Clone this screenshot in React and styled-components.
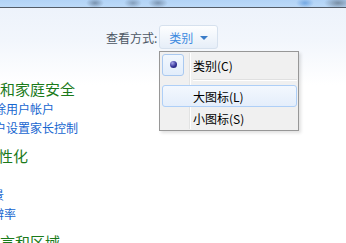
import React from 'react';
import styled, { createGlobalStyle } from 'styled-components';

const GlobalStyle = createGlobalStyle`
  html, body {
    margin: 0;
    padding: 0;
    background: #fff;
  }
  body {
    font-family: "Noto Sans CJK SC", "Noto Sans", sans-serif;
    font-size: 12px;
    overflow: hidden;
  }
`;

const sections = [
  {
    title: '用户帐户和家庭安全',
    head: -60,
    link: -54,
    links: ['添加或删除用户帐户', '为所有用户设置家长控制'],
  },
  {
    title: '外观和个性化',
    head: -62,
    link: -68,
    links: ['更改主题', '更改桌面背景', '调整屏幕分辨率'],
  },
  {
    title: '时钟、语言和区域',
    head: -60,
    link: -68,
    links: ['更改键盘或其他输入法'],
  },
];

const menuItems = [
  { label: '类别(C)', checked: true },
  { separator: true },
  { label: '大图标(L)', hover: true },
  { label: '小图标(S)' },
];

const App = () => {
  return (
    <Page>
      <GlobalStyle />
      <TitleStrip />
      <Header>
        <Label>查看方式:</Label>
        <ViewButton>
          类别
          <Arrow />
        </ViewButton>
      </Header>
      <Content>
        {sections.map((s) => (
          <Section key={s.title}>
            <Heading $shift={s.head}>{s.title}</Heading>
            {s.links.map((l) => (
              <TaskLink key={l} $shift={s.link}>
                {l}
              </TaskLink>
            ))}
          </Section>
        ))}
      </Content>
      <Menu>
        <Gutter />
        {menuItems.map((item, i) =>
          item.separator ? (
            <Separator key={i} />
          ) : (
            <MenuItem key={i} $hover={item.hover}>
              <CheckBox $checked={item.checked}>{item.checked && <Bullet />}</CheckBox>
              <ItemText>{item.label}</ItemText>
            </MenuItem>
          )
        )}
      </Menu>
    </Page>
  );
};

export default App;

const Page = styled.div`
  position: relative;
  width: 346px;
  height: 243px;
  overflow: hidden;
  background: linear-gradient(#ecf2fb 0px, #f2f6fc 40px, #ffffff 85px);
`;

const TitleStrip = styled.div`
  height: 7px;
  border-bottom: 1px solid #535c67;
  background:
    radial-gradient(ellipse 9px 5px at 95px 3px, rgba(70, 90, 115, 0.55), transparent),
    radial-gradient(ellipse 9px 5px at 133px 3px, rgba(70, 90, 115, 0.45), transparent),
    radial-gradient(ellipse 10px 5px at 158px 3px, rgba(70, 90, 115, 0.5), transparent),
    radial-gradient(ellipse 9px 5px at 305px 3px, rgba(60, 130, 210, 0.55), transparent),
    radial-gradient(ellipse 14px 6px at 338px 3px, rgba(80, 95, 110, 0.6), transparent),
    linear-gradient(#b2d3f6, #bcdaf8);
`;

const Header = styled.div`
  display: flex;
  align-items: center;
  height: 24px;
  padding: 17px 0 0 106px;
`;

const Label = styled.span`
  color: #4b5563;
  font-size: 12px;
  margin-right: 2px;
`;

const ViewButton = styled.div`
  display: flex;
  align-items: center;
  box-sizing: border-box;
  width: 59px;
  height: 24px;
  padding-left: 9px;
  border: 1px solid #d6e1ee;
  border-radius: 3px;
  background: linear-gradient(#fdfeff, #e6eef8);
  color: #3d8ae0;
  font-size: 12px;
`;

const Arrow = styled.span`
  width: 0;
  height: 0;
  margin-left: 7px;
  margin-top: 1px;
  border-left: 4px solid transparent;
  border-right: 4px solid transparent;
  border-top: 4px solid #3a7cc8;
`;

const Content = styled.div`
  display: flex;
  flex-direction: column;
  gap: 9px;
  margin-top: 30px;
`;

const Section = styled.div`
  display: flex;
  flex-direction: column;
`;

const Heading = styled.div`
  margin-left: ${(p) => p.$shift}px;
  font-size: 15px;
  line-height: 20px;
  color: #1a7a1a;
  white-space: nowrap;
`;

const TaskLink = styled.div`
  margin-left: ${(p) => p.$shift}px;
  font-size: 12px;
  line-height: 19px;
  color: #1766d0;
  white-space: nowrap;
`;

const Menu = styled.div`
  position: absolute;
  left: 159px;
  top: 51px;
  box-sizing: border-box;
  width: 140px;
  height: 80px;
  padding: 2px 1px 2px 2px;
  border: 1px solid #979797;
  background: #f0f0f0;
  box-shadow: 2px 2px 3px rgba(0, 0, 0, 0.12);
`;

const Gutter = styled.div`
  position: absolute;
  left: 29px;
  top: 1px;
  bottom: 1px;
  width: 1px;
  background: #e2e3e3;
  border-right: 1px solid #ffffff;
`;

const MenuItem = styled.div`
  position: relative;
  display: flex;
  align-items: center;
  box-sizing: border-box;
  height: 22px;
  border: 1px solid ${(p) => (p.$hover ? '#aecff7' : 'transparent')};
  border-radius: 3px;
  background: ${(p) => (p.$hover ? 'linear-gradient(#f3f8fe, #e4eefb)' : 'transparent')};
`;

const CheckBox = styled.div`
  display: flex;
  align-items: center;
  justify-content: center;
  box-sizing: border-box;
  width: 22px;
  height: 22px;
  margin: -1px 0 0 -1px;
  border: 1px solid ${(p) => (p.$checked ? '#a9c9f0' : 'transparent')};
  border-radius: 3px;
  background: ${(p) => (p.$checked ? 'linear-gradient(#f1f7fe, #e2edfb)' : 'transparent')};
`;

const Bullet = styled.span`
  width: 7px;
  height: 7px;
  border-radius: 50%;
  background: radial-gradient(circle at 35% 30%, #a6a6e8, #34349a 55%, #1c1c60);
`;

const ItemText = styled.span`
  margin-left: 9px;
  color: #000;
  font-size: 12px;
`;

const Separator = styled.div`
  height: 1px;
  margin: 3px 0 4px 31px;
  background: #e0e0e0;
  border-bottom: 1px solid #ffffff;
`;
